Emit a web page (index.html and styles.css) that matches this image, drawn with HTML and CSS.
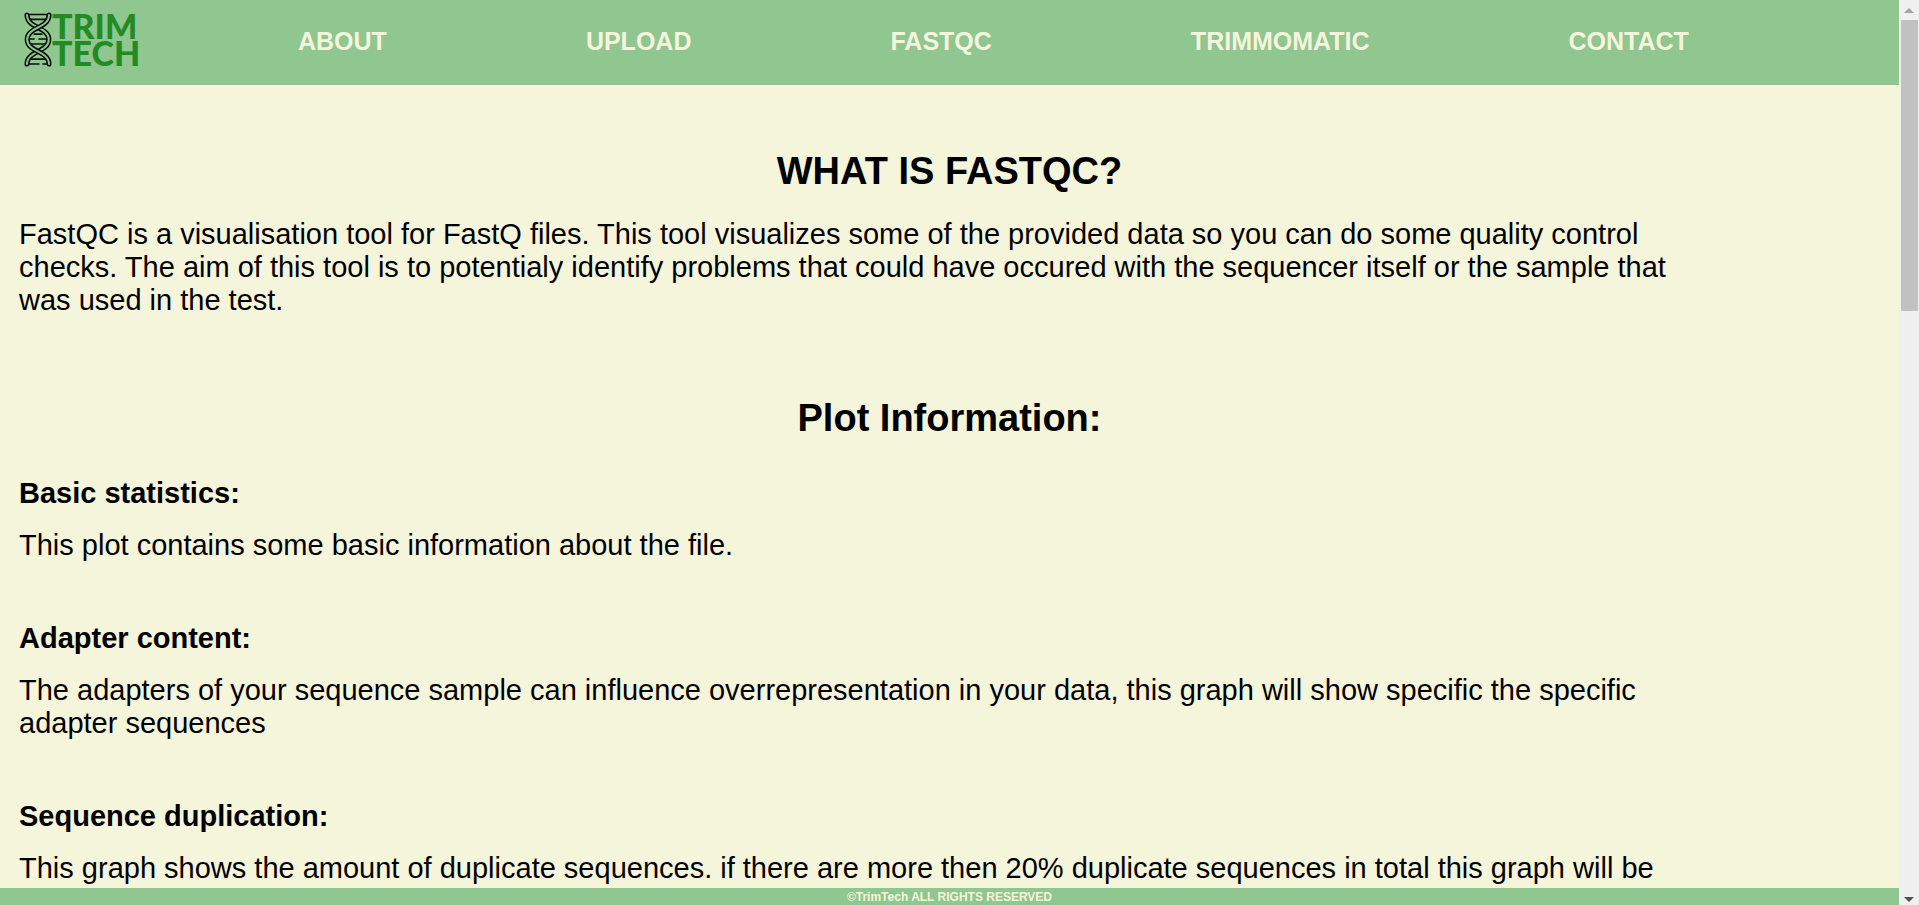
FILE: index.html
```html
<!DOCTYPE html>
<html lang="en">
<head>
<meta charset="utf-8">
<title>TrimTech - FastQC</title>
<link rel="stylesheet" href="styles.css">
</head>
<body>
<div class="page">
  <header class="topbar">
    <a class="logo" href="#" aria-label="TrimTech home">
      <svg class="helix" viewBox="0 0 28 56" fill="none" stroke-linecap="round" stroke-linejoin="round">
        <path stroke="#0a0f0a" stroke-width="1.6" d="M4 2.5H24M6 7.5H22M10 22.5H18M6 27.5H10M15 27.5H23M6 32.5H22M6 48H22M4 53H15M19 53H24"/>
        <path stroke="#0a0f0a" stroke-width="5.2" d="M2.8 3C3 17 25 15 25 28S3 39 2.8 53"/>
        <path stroke="#90c68f" stroke-width="2" d="M2.8 3C3 17 25 15 25 28S3 39 2.8 53"/>
        <path stroke="#0a0f0a" stroke-width="5.2" d="M25.2 3C25 17 3 15 3 28S25 39 25.2 53"/>
        <path stroke="#90c68f" stroke-width="2" d="M25.2 3C25 17 3 15 3 28S25 39 25.2 53"/>
      </svg>
      <span class="wordmark">TRIM<br>TECH</span>
    </a>
    <nav class="menu">
      <a href="#">ABOUT</a>
      <a href="#">UPLOAD</a>
      <a href="#">FASTQC</a>
      <a href="#">TRIMMOMATIC</a>
      <a href="#">CONTACT</a>
    </nav>
  </header>
  <main class="content">
    <h1>WHAT IS FASTQC?</h1>
    <p>FastQC is a visualisation tool for FastQ files. This tool visualizes some of the provided data so you can do some quality control checks. The aim of this tool is to potentialy identify problems that could have occured with the sequencer itself or the sample that was used in the test.</p>
    <h2>Plot Information:</h2>
    <section>
      <h3>Basic statistics:</h3>
      <p>This plot contains some basic information about the file.</p>
    </section>
    <section>
      <h3>Adapter content:</h3>
      <p>The adapters of your sequence sample can influence overrepresentation in your data, this graph will show specific the specific adapter sequences</p>
    </section>
    <section>
      <h3>Sequence duplication:</h3>
      <p>This graph shows the amount of duplicate sequences. if there are more then 20% duplicate sequences in total this graph will be</p>
    </section>
  </main>
  <footer class="footer">©TrimTech ALL RIGHTS RESERVED</footer>
</div>
<div class="scrollbar" aria-hidden="true">
  <svg class="arrow" viewBox="0 0 20 20"><path fill="#a3a3a3" d="M10 8L15 13H5z"/></svg>
  <div class="track"><div class="thumb"></div></div>
  <svg class="arrow" viewBox="0 0 20 20"><path fill="#505050" d="M5 12H15L10 17z"/></svg>
</div>
</body>
</html>
```
FILE: styles.css
```css
* {
  box-sizing: border-box;
}

body {
  margin: 0;
  height: 100vh;
  display: flex;
  overflow: hidden;
  background: #f5f5dc;
  color: #000;
  font-family: "Liberation Sans", Arial, sans-serif;
}

.page {
  flex: 1;
  min-width: 0;
  display: flex;
  flex-direction: column;
}

.topbar {
  flex: none;
  display: flex;
  align-items: flex-start;
  background: #90c690;
  padding: 12px 24px 18px;
}

.logo {
  display: flex;
  width: 274px;
  color: #228b22;
  text-decoration: none;
}

.helix {
  width: 28px;
  height: 55px;
}

.wordmark {
  font-family: Lato, sans-serif;
  font-size: 34px;
  font-weight: 900;
  line-height: 27px;
}

.menu {
  display: flex;
  gap: 199px;
  padding-top: 15px;
}

.menu a {
  color: #f5f5dc;
  font-size: 25px;
  font-weight: bold;
  line-height: 29px;
  text-decoration: none;
}

.content {
  flex: 1;
  min-height: 0;
  overflow: hidden;
  padding: 64px 19px 0;
}

h1,
h2 {
  margin: 0;
  font-size: 38px;
  line-height: 44px;
  text-align: center;
}

h3,
p {
  margin: 0;
  font-size: 29px;
  line-height: 33px;
}

p {
  max-width: 90%;
}

h1 + p {
  margin-top: 25px;
}

h2 {
  margin: 79px 0 37px;
}

h3 {
  margin-bottom: 19px;
}

section + section {
  margin-top: 60px;
}

.footer {
  flex: none;
  background: #90c690;
  color: #f5f5dc;
  font-size: 12px;
  font-weight: bold;
  line-height: 15px;
  padding-top: 2px;
  text-align: center;
}

.scrollbar {
  flex: none;
  width: 20px;
  display: flex;
  flex-direction: column;
  background: #f0f0f0;
}

.arrow {
  display: block;
  width: 20px;
  height: 20px;
}

.track {
  flex: 1;
  padding: 0 1px 0 2px;
}

.thumb {
  height: 33.6%;
  background: #c1c1c1;
}
```
